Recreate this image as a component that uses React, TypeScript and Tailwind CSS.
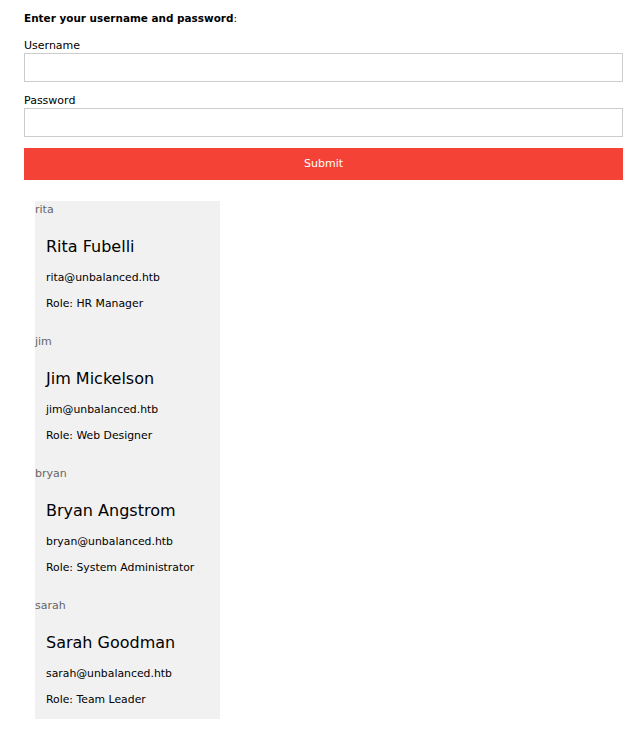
import React from 'react';

const users = [
  { id: 'rita', name: 'Rita Fubelli', email: 'rita@unbalanced.htb', role: 'HR Manager' },
  { id: 'jim', name: 'Jim Mickelson', email: 'jim@unbalanced.htb', role: 'Web Designer' },
  { id: 'bryan', name: 'Bryan Angstrom', email: 'bryan@unbalanced.htb', role: 'System Administrator' },
  { id: 'sarah', name: 'Sarah Goodman', email: 'sarah@unbalanced.htb', role: 'Team Leader' },
];

export default function App() {
  return (
    <div className="min-h-[731px] bg-white pl-6 pr-[18px] pt-[12px] text-[11px] text-black" style={{ fontFamily: '"DejaVu Sans", sans-serif' }}>
      <p className="h-[14px] text-[10.45px] leading-[12px]">
        <span className="font-bold">Enter your username and password</span>:
      </p>
      <label className="mt-[13px] block h-[14px] leading-[14px]">Username</label>
      <input type="text" className="block h-[29px] w-full border border-[#cccccc] bg-white outline-none" />
      <label className="mt-[12px] block h-[14px] leading-[14px]">Password</label>
      <input type="password" className="block h-[29px] w-full border border-[#cccccc] bg-white outline-none" />
      <button className="mt-[11px] block h-[32px] w-full bg-[#f44336] text-[11px] text-white">Submit</button>

      <div className="ml-[11px] mt-[21px] w-[185px] bg-[#f1f1f1] pb-[12px]">
        {users.map((u, i) => (
          <div key={u.id} className={i > 0 ? 'mt-[22px]' : ''}>
            <div className="h-[17px] pt-[1px] leading-4 text-[#666666]">{u.id}</div>
            <div className="pl-[11px] text-[10.85px]">
              <h3 className="mt-[19px] h-5 text-[16px] leading-5">{u.name}</h3>
              <p className="mt-[14px] h-[14px] leading-[14px]">{u.email}</p>
              <p className="mt-[12px] h-[14px] leading-[14px]">Role: {u.role}</p>
            </div>
          </div>
        ))}
      </div>
    </div>
  );
}
